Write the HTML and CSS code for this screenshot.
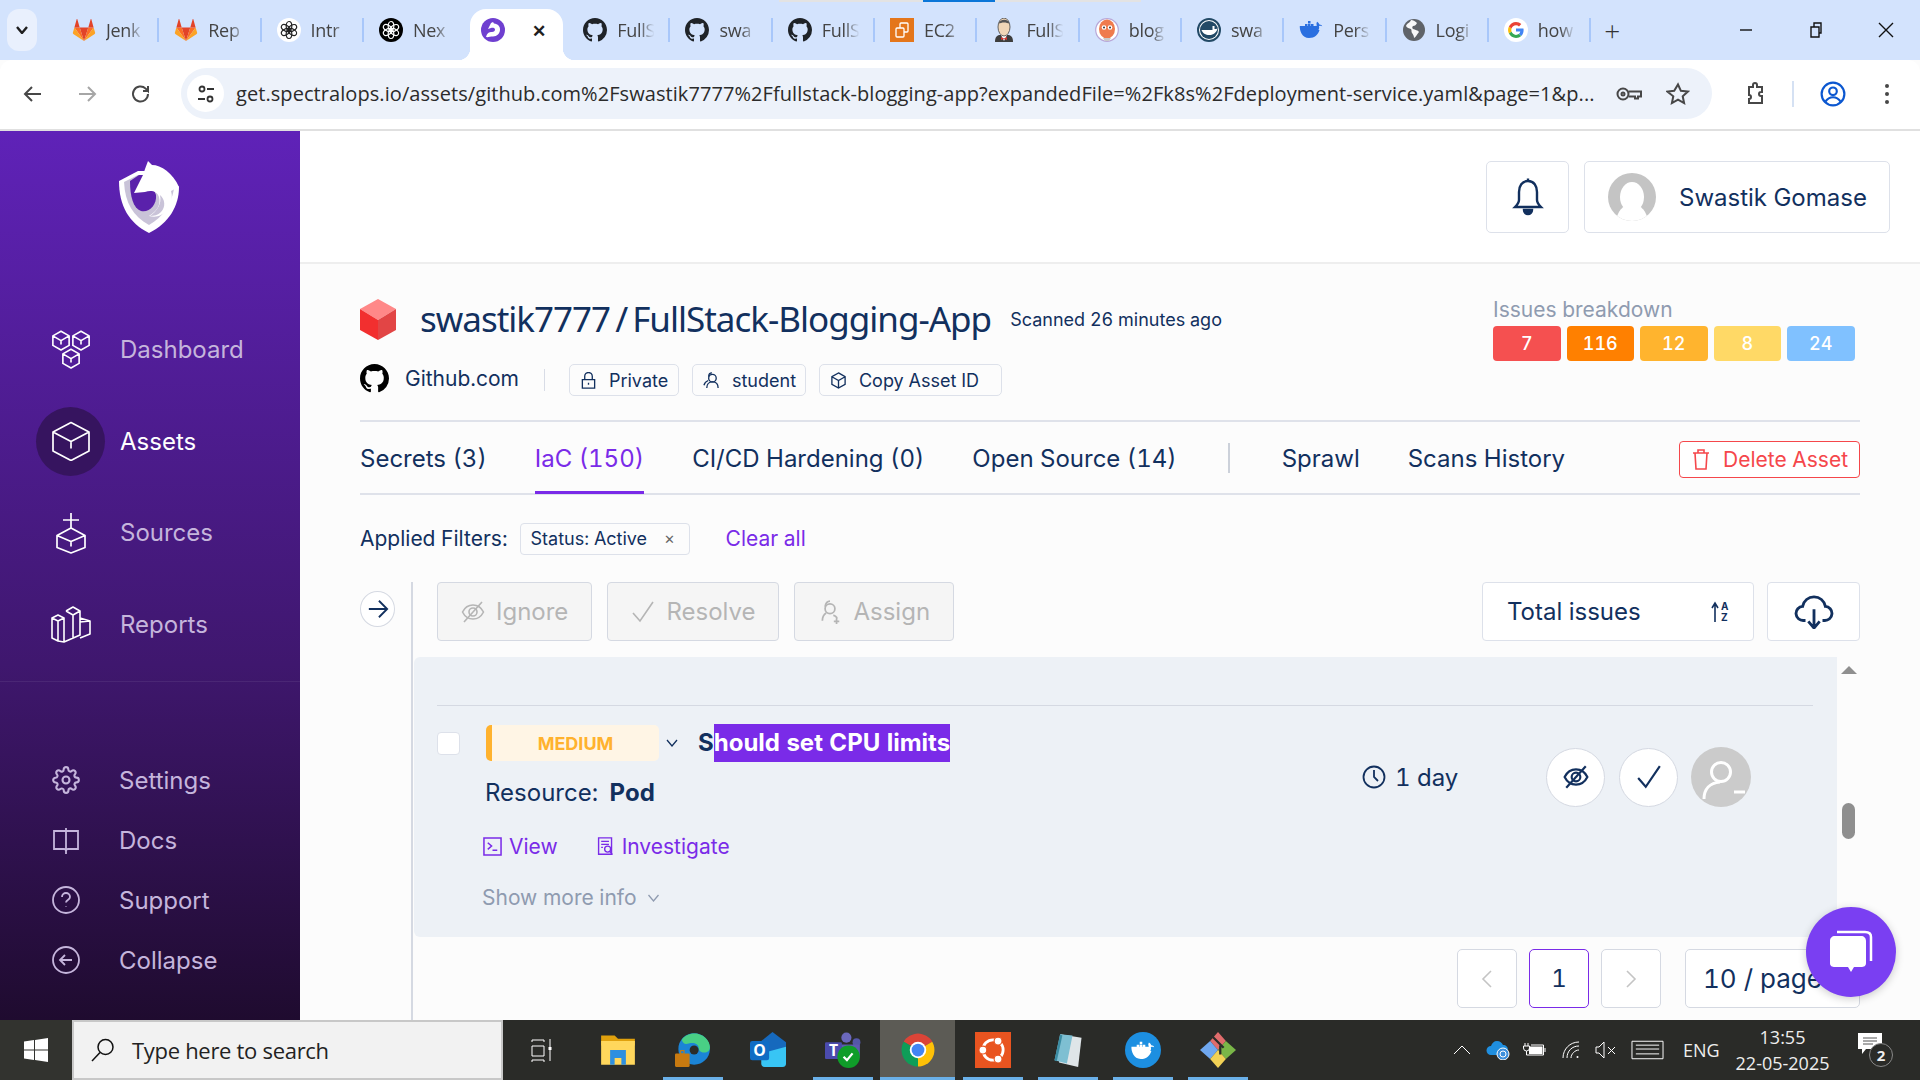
FILE: index.html
```html
<!DOCTYPE html>
<html lang="en">
<head>
    <meta charset="UTF-8">
    <meta name="viewport" content="width=device-width, initial-scale=1.0">
    <title>Assets - Spectral</title>
    <link rel="stylesheet" href="styles.css">
</head>
<body>
    <svg class="sprite" xmlns="http://www.w3.org/2000/svg">
        <defs>
            <symbol id="i-gitlab" viewBox="0 0 24 24">
                <path fill="#e24329" d="M12 23 16.3 9.5H7.7z"/>
                <path fill="#fc6d26" d="M12 23 7.7 9.5H2.4zM12 23l4.3-13.5h5.3z"/>
                <path fill="#fca326" d="M2.4 9.5.9 14.6c-.2.5 0 1 .4 1.3L12 23zM21.6 9.5l1.5 5.1c.2.5 0 1-.4 1.3L12 23z"/>
                <path fill="#e24329" d="M2.4 9.5h5.3L5.4 1.4c-.1-.4-.7-.4-.8 0zM21.6 9.5h-5.3l2.3-8.1c.1-.4.7-.4.8 0z"/>
            </symbol>
            <g id="knot" fill="none" stroke-width="1.2">
                <ellipse cx="12" cy="8" rx="2.8" ry="4.5"/>
                <ellipse cx="12" cy="16" rx="2.8" ry="4.5"/>
                <ellipse cx="12" cy="8" rx="2.8" ry="4.5" transform="rotate(60 12 12)"/>
                <ellipse cx="12" cy="16" rx="2.8" ry="4.5" transform="rotate(60 12 12)"/>
                <ellipse cx="12" cy="8" rx="2.8" ry="4.5" transform="rotate(120 12 12)"/>
                <ellipse cx="12" cy="16" rx="2.8" ry="4.5" transform="rotate(120 12 12)"/>
            </g>
            <symbol id="i-gpt-white" viewBox="0 0 24 24">
                <circle cx="12" cy="12" r="12" fill="#fff"/>
                <use href="#knot" stroke="#222"/>
            </symbol>
            <symbol id="i-gpt-black" viewBox="0 0 24 24">
                <circle cx="12" cy="12" r="12" fill="#000"/>
                <use href="#knot" stroke="#fff"/>
            </symbol>
            <symbol id="i-spectral" viewBox="0 0 24 24">
                <circle cx="12" cy="12" r="12" fill="#6f3fd0"/>
                <path fill="#fff" d="M5 19c1-4 3-5 6-5 2 0 3-1 3-2.5 0-1.500-2-2-4-1.500L7 11l3-6 2-1 1 1.500c4 .5 6 3 6 6 0 4-3 7-7 7-3 0-5 1-7 .5z"/>
            </symbol>
            <symbol id="i-github" viewBox="0 0 16 16">
                <path d="M8 0C3.58 0 0 3.58 0 8c0 3.54 2.29 6.53 5.47 7.59.4.07.55-.17.55-.38 0-.19-.01-.82-.01-1.49-2.01.37-2.53-.49-2.69-.94-.09-.23-.48-.94-.82-1.13-.28-.15-.68-.52-.01-.53.63-.01 1.08.58 1.23.82.72 1.21 1.87.87 2.33.66.07-.52.28-.87.51-1.07-1.78-.2-3.64-.89-3.64-3.95 0-.87.31-1.59.82-2.15-.08-.2-.36-1.02.08-2.12 0 0 .67-.21 2.2.82.64-.18 1.32-.27 2-.27.68 0 1.36.09 2 .27 1.53-1.04 2.2-.82 2.2-.82.44 1.1.16 1.92.08 2.12.51.56.82 1.27.82 2.15 0 3.07-1.87 3.75-3.65 3.95.29.25.54.73.54 1.48 0 1.07-.01 1.93-.01 2.2 0 .21.15.46.55.38A8.013 8.013 0 0016 8c0-4.42-3.58-8-8-8z"/>
            </symbol>
            <symbol id="i-ec2" viewBox="0 0 24 24">
                <rect width="24" height="24" fill="#e4761b"/>
                <g fill="none" stroke="#fff" stroke-width="1.3">
                    <rect x="10" y="5" width="8" height="9" rx="1"/>
                    <rect x="6" y="10" width="8" height="9" rx="1" fill="#e4761b"/>
                </g>
            </symbol>
            <symbol id="i-jenkins" viewBox="0 0 24 24">
                <path fill="#3d3d3d" d="M3 24c0-5 2-7 5-7h8c3 0 5 2 5 7z"/>
                <path fill="#fff" d="M9 17h6l-3 6z"/>
                <path fill="#d33833" d="M9 19l3 1.5 3-1.500v3l-3-1-3 1z"/>
                <ellipse cx="12" cy="9" rx="6" ry="9" fill="#f0d6b7" stroke="#444" stroke-width=".8"/>
                <path fill="#555" d="M6.5 6c1-5 10-6 11 0-3-2-8-2-11 0z"/>
            </symbol>
            <symbol id="i-argo" viewBox="0 0 24 24">
                <circle cx="12" cy="12" r="11.3" fill="#fff" stroke="#b9a8d8" stroke-width="1.2"/>
                <ellipse cx="12" cy="11" rx="8" ry="9.5" fill="#ef7b4d"/>
                <circle cx="9" cy="9.5" r="2.3" fill="#fff"/>
                <circle cx="15" cy="9.5" r="2.3" fill="#fff"/>
                <circle cx="9" cy="9.5" r="1" fill="#333"/>
                <circle cx="15" cy="9.5" r="1" fill="#333"/>
                <path fill="#c9c9c9" d="M8 20l2 3h4l2-3z"/>
            </symbol>
            <symbol id="i-dockerhub" viewBox="0 0 24 24">
                <circle cx="12" cy="12" r="11" fill="#fff" stroke="#234a66" stroke-width="2"/>
                <circle cx="12" cy="12" r="9" fill="#234a66"/>
                <path fill="#fff" d="M4.5 12h11V8h2v3c1 0 2 0 3-.5-1 4-4 6.500-8 6.500-4 0-7-2-8-5z"/>
            </symbol>
            <g id="whale">
                <path d="M.8 12h18.600c.9-1.100 1-2.600.5-3.700 1.100-.7 2.200-.5 3.300 0-.4-1.300-1.600-2-2.900-1.900-.4-1.300-1.300-2.100-2.200-2.600-.8 1.200-.9 2.700 0 3.800-.6.4-1.300.4-2 .4H.8C.5 12.500 3 20 10 20c6 0 9-3.500 10.500-8z"/>
                <path d="M3 9h2.500v2.500H3zM6 9h2.500v2.500H6zM9 9h2.500v2.500H9zM12 9h2.500v2.500H12zM6 6h2.500v2.500H6zM9 6h2.500v2.500H9zM12 6h2.500v2.500H12zM9 3h2.500v2.500H9z"/>
            </g>
            <symbol id="i-docker" viewBox="0 0 24 24">
                <use href="#whale" fill="#2a6fe0"/>
            </symbol>
            <symbol id="i-globe" viewBox="0 0 24 24">
                <circle cx="12" cy="12" r="11" fill="#5f6368"/>
                <path fill="#fff" d="M9 2c-1 3-4 3-5 6 1 2 3 2 5 3 1 1 0 3 1 4s2 3 2 5c2-1 3-4 5-6-1-2-4-2-6-3-1-1-1-2 0-3 2 0 3-1 4-3-2-2-4-3-6-3z" opacity=".95"/>
            </symbol>
            <symbol id="i-google" viewBox="0 0 24 24">
                <circle cx="12" cy="12" r="12" fill="#fff"/>
                <path fill="#4285f4" d="M19.6 12.200c0-.6 0-1.100-.2-1.600H12v3h4.300c-.2 1-.8 1.900-1.600 2.500l2.500 2c1.500-1.400 2.400-3.400 2.400-5.900z"/>
                <path fill="#34a853" d="M12 20c2.200 0 4-.7 5.200-1.900l-2.500-2c-.7.5-1.600.8-2.700.8-2.100 0-3.900-1.400-4.500-3.300l-2.600 2C6.200 18.200 8.900 20 12 20z"/>
                <path fill="#fbbc05" d="M7.500 13.600c-.3-1-.3-2.100 0-3.100l-2.600-2c-1.100 2.200-1.100 4.900 0 7.100z"/>
                <path fill="#ea4335" d="M12 7.200c1.200 0 2.200.4 3 1.200l2.300-2.300C15.900 4.800 14.100 4 12 4 8.900 4 6.200 5.800 4.900 8.500l2.600 2c.6-1.900 2.400-3.300 4.500-3.300z"/>
            </symbol>
            <g id="cube-small" fill="none" stroke-width="1.3" stroke-linejoin="round">
                <path d="M8 1l6.500 3.700v7.600L8 16l-6.500-3.700V4.700zM1.500 4.700 8 8.500l6.500-3.800M8 8.500V11.500"/>
            </g>
            <symbol id="i-dashboard" viewBox="0 0 40 40">
                <g stroke="#fff">
                    <use href="#cube-small" transform="scale(1.25)"/>
                    <use href="#cube-small" transform="translate(20 0) scale(1.25)"/>
                    <use href="#cube-small" transform="translate(10 18) scale(1.25)"/>
                </g>
            </symbol>
            <symbol id="i-cube" viewBox="0 0 40 40">
                <path fill="none" stroke="#fff" stroke-width="1.7" stroke-linejoin="round" d="M20 1.500 38 11v19l-18 9.500L2 30V11zM2 11l18 9.500L38 11M20 20.500v7"/>
            </symbol>
            <symbol id="i-sources" viewBox="0 0 32 42">
                <path fill="none" stroke="#fff" stroke-width="1.7" stroke-linejoin="round" d="M16 16 30 23.500v12L16 41 2 35.500v-12zM2 23.500l14 6 14-6M16 29.500v5M16 1v16M8 8h16"/>
            </symbol>
            <symbol id="i-reports" viewBox="0 0 40 40">
                <path fill="none" stroke="#fff" stroke-width="1.6" stroke-linejoin="round" d="M1 14l6-3 6 3v24l-6-1-6-3zM1 14l6 3 6-3M7 17v20M15 7l7-4 7 4v24l-16 7M15 7l7 4 7-4M22 11v23M29 14l10 3v13l-10 4M29 18l10-1"/>
            </symbol>
            <symbol id="i-gear" viewBox="0 0 24 24">
                <circle cx="12" cy="12" r="3"/>
                <path d="M19.4 15a1.65 1.65 0 0 0 .33 1.82l.06.06a2 2 0 0 1 0 2.83 2 2 0 0 1-2.83 0l-.06-.06a1.65 1.65 0 0 0-1.82-.33 1.65 1.65 0 0 0-1 1.51V21a2 2 0 0 1-2 2 2 2 0 0 1-2-2v-.09A1.65 1.65 0 0 0 9 19.4a1.65 1.65 0 0 0-1.82.33l-.06.06a2 2 0 0 1-2.83 0 2 2 0 0 1 0-2.83l.06-.06a1.65 1.65 0 0 0 .33-1.82 1.65 1.65 0 0 0-1.51-1H3a2 2 0 0 1-2-2 2 2 0 0 1 2-2h.09A1.65 1.65 0 0 0 4.6 9a1.65 1.65 0 0 0-.33-1.82l-.06-.06a2 2 0 0 1 0-2.83 2 2 0 0 1 2.83 0l.06.06a1.65 1.65 0 0 0 1.82.33H9a1.65 1.65 0 0 0 1-1.51V3a2 2 0 0 1 2-2 2 2 0 0 1 2 2v.09a1.65 1.65 0 0 0 1 1.51 1.65 1.65 0 0 0 1.82-.33l.06-.06a2 2 0 0 1 2.83 0 2 2 0 0 1 0 2.83l-.06.06a1.65 1.65 0 0 0-.33 1.82V9a1.65 1.65 0 0 0 1.51 1H21a2 2 0 0 1 2 2 2 2 0 0 1-2 2h-.09a1.65 1.65 0 0 0-1.51 1z"/>
            </symbol>
            <symbol id="i-book" viewBox="0 0 28 28">
                <path d="M14 5H2v18h10c1 0 2 .5 2 2 0-1.500 1-2 2-2h10V5zM14 2v26"/>
            </symbol>
            <symbol id="i-help" viewBox="0 0 28 28">
                <circle cx="14" cy="14" r="13"/>
                <path d="M10 11a4 4 0 0 1 8 0c0 3-4 3-4 5.500M14 20.500v.5"/>
            </symbol>
            <symbol id="i-collapse" viewBox="0 0 28 28">
                <circle cx="14" cy="14" r="13"/>
                <path d="M20 14H8M13 9l-5 5 5 5"/>
            </symbol>
            <symbol id="i-bell" viewBox="0 0 32 40">
                <path d="M16 4c-6 0-9 5-9 11v8c0 3-2 5-4 7h26c-2-2-4-4-4-7v-8c0-6-3-11-9-11zM16 1.500V4"/>
                <path fill="currentColor" d="M12 33h8a4 4 0 0 1-8 0z"/>
            </symbol>
            <symbol id="i-lock" viewBox="0 0 16 18">
                <path d="M1.500 8h13v9h-13zM4 8V4.500a4 4 0 0 1 8 0V8M8 11.500v2"/>
            </symbol>
            <symbol id="i-user" viewBox="0 0 18 18">
                <circle cx="10" cy="6.500" r="4"/>
                <path d="M4 17c0-4 2-6.500 6-6.500s6 2 6 6.500M6 5C6 2.500 7 1 9.500 1M5.500 9C3 10 1.500 12 1 14"/>
            </symbol>
            <symbol id="i-user-add" viewBox="0 0 20 22">
                <circle cx="10" cy="8" r="4.500"/>
                <path d="M3 19c0-4 2-6 3.500-7M5.500 6C6 3 8 1 10 1M13 14c1 0 3 1 3.500 3M16 17v5M13.500 19.500h5"/>
            </symbol>
            <symbol id="i-box" viewBox="0 0 18 18">
                <path d="M9 1l7 4v8l-7 4-7-4V5zM2 5l7 4 7-4M9 9v8"/>
            </symbol>
            <symbol id="i-trash" viewBox="0 0 18 22">
                <path d="M3 5h12l-1 16H4zM1 5h16M6 5V2h6v3"/>
            </symbol>
            <symbol id="i-eye-off" viewBox="0 0 24 24">
                <path d="M1.500 12C4 7 8 5 12 5s8 2 10.500 7c-2.500 5-6.500 7-10.500 7S4 17 1.500 12z"/>
                <circle cx="12" cy="12" r="4"/>
                <path d="M21 2 3 22"/>
            </symbol>
            <symbol id="i-check" viewBox="0 0 24 24">
                <path d="M2 13l7 8L22 2"/>
            </symbol>
            <symbol id="i-chevron" viewBox="0 0 12 8">
                <path d="M1 1l5 6 5-6"/>
            </symbol>
            <symbol id="i-star" viewBox="0 0 24 24">
                <path d="M12 2.500l2.900 6.300 6.900.8-5.100 4.700 1.400 6.800-6.100-3.400-6.100 3.400 1.400-6.800L1.300 9.600l6.900-.8z"/>
            </symbol>
        </defs>
    </svg>

    <div class="load-bar"><span class="load-grey"></span><span class="load-blue"></span><span class="load-grey wide"></span></div>

    <div class="tabstrip">
        <button class="tab-menu"><svg class="ico-chev"><use href="#i-chevron"/></svg></button>
        <div class="tab"><svg class="fav"><use href="#i-gitlab"/></svg><span class="tab-title">Jenk</span></div>
        <div class="tab"><svg class="fav"><use href="#i-gitlab"/></svg><span class="tab-title">Rep</span></div>
        <div class="tab"><svg class="fav"><use href="#i-gpt-white"/></svg><span class="tab-title">Intr</span></div>
        <div class="tab no-line"><svg class="fav"><use href="#i-gpt-black"/></svg><span class="tab-title">Nex</span></div>
        <div class="tab active"><svg class="fav"><use href="#i-spectral"/></svg><span class="tab-close">✕</span></div>
        <div class="tab"><svg class="fav gh"><use href="#i-github"/></svg><span class="tab-title">FullS</span></div>
        <div class="tab"><svg class="fav gh"><use href="#i-github"/></svg><span class="tab-title">swa</span></div>
        <div class="tab"><svg class="fav gh"><use href="#i-github"/></svg><span class="tab-title">FullS</span></div>
        <div class="tab"><svg class="fav"><use href="#i-ec2"/></svg><span class="tab-title">EC2</span></div>
        <div class="tab"><svg class="fav"><use href="#i-jenkins"/></svg><span class="tab-title">FullS</span></div>
        <div class="tab"><svg class="fav"><use href="#i-argo"/></svg><span class="tab-title">blog</span></div>
        <div class="tab"><svg class="fav"><use href="#i-dockerhub"/></svg><span class="tab-title">swa</span></div>
        <div class="tab"><svg class="fav"><use href="#i-docker"/></svg><span class="tab-title">Pers</span></div>
        <div class="tab"><svg class="fav"><use href="#i-globe"/></svg><span class="tab-title">Logi</span></div>
        <div class="tab"><svg class="fav"><use href="#i-google"/></svg><span class="tab-title">how</span></div>
        <div class="tab-new">+</div>
        <div class="win-controls">
            <svg class="win-ico" viewBox="0 0 16 16"><path d="M2 8h12"/></svg>
            <svg class="win-ico" viewBox="0 0 16 16"><path d="M3 5h8v10H3zM6 5V1h7v10h-2"/></svg>
            <svg class="win-ico" viewBox="0 0 16 16"><path d="M1 1l14 14M15 1 1 15"/></svg>
        </div>
    </div>

    <div class="toolbar">
        <div class="nav-btns">
            <svg class="tool-ico" viewBox="0 0 24 24"><path d="M20 12H5M11 5l-7 7 7 7"/></svg>
            <svg class="tool-ico off" viewBox="0 0 24 24"><path d="M4 12h15M13 5l7 7-7 7"/></svg>
            <svg class="tool-ico" viewBox="0 0 24 24"><path d="M19 12a7.500 7.500 0 1 1-2.300-5.400L19 9V4M19 9h-5"/></svg>
        </div>
        <div class="omnibox">
            <span class="site-info"><svg class="tune" viewBox="0 0 20 20"><circle cx="6" cy="5" r="2.500"/><path d="M11 5h7M2 15h7"/><circle cx="14" cy="15" r="2.500"/></svg></span>
            <span class="url">get.spectralops.io/assets/github.com%2Fswastik7777%2Ffullstack-blogging-app?expandedFile=%2Fk8s%2Fdeployment-service.yaml&amp;page=1&amp;p...</span>
            <svg class="tool-ico key" viewBox="0 0 28 24"><circle cx="8" cy="12" r="5.500"/><circle cx="8" cy="12" r="1.500"/><path d="M13.500 9.500H26v5h-3v2h-3v-2h-6.500"/></svg>
            <svg class="tool-ico star"><use href="#i-star"/></svg>
        </div>
        <div class="tool-right">
            <svg class="tool-ico" viewBox="0 0 24 24"><path d="M6 5h4V3a2 2 0 0 1 4 0v2h5v5h-1a2 2 0 0 0 0 4h1v7H6v-4a2 2 0 0 0 0-4z"/></svg>
            <span class="tool-sep"></span>
            <svg class="tool-ico profile" viewBox="0 0 24 24"><circle cx="12" cy="12" r="10.500"/><circle cx="12" cy="9.500" r="3.500"/><path d="M5 19c2-3 4-4 7-4s5 1 7 4"/></svg>
            <span class="dots"><i></i><i></i><i></i></span>
        </div>
    </div>

    <div class="app">
        <aside class="sidebar">
            <div class="logo">
                <svg class="logo-mark" viewBox="0 0 60 72">
                    <path fill="#fff" d="M0 20 19 10 45 10 60 26C60 45 50 62 30 72 10 62 0 45 0 20z"/>
                    <path fill="#c9c3d8" d="M5 21 19 14 45 16 55 28C52 44 44 56 30 64 14 55 6 42 5 21z"/>
                    <path fill="#5a21ab" d="M11 20 20 14 29 14 37 34C38 44 30 52 22 50 14 47 11 35 11 20z"/>
                    <path fill="#fff" d="M29 0 33 4C42 4 54 12 60 26L52 30C55 40 50 50 42 54 38 56 34 56 30 55 38 50 42 44 40 36 38 30 32 29 26 31L15 32 24 14 26 8z"/>
                    <path fill="#c9c3d8" d="M41 34C46 38 47 46 42 51 39 54 35 55 31 55 38 50 43 43 41 34z"/>
                </svg>
            </div>
            <nav class="nav-main">
                <a class="nav-item"><span class="nav-icon"><svg class="ico-40"><use href="#i-dashboard"/></svg></span>Dashboard</a>
                <a class="nav-item current"><span class="nav-icon"><svg class="ico-40"><use href="#i-cube"/></svg></span>Assets</a>
                <a class="nav-item"><span class="nav-icon"><svg class="ico-src"><use href="#i-sources"/></svg></span>Sources</a>
                <a class="nav-item"><span class="nav-icon"><svg class="ico-40"><use href="#i-reports"/></svg></span>Reports</a>
            </nav>
            <nav class="nav-sub">
                <a class="sub-item"><svg class="ico-28"><use href="#i-gear"/></svg>Settings</a>
                <a class="sub-item"><svg class="ico-28"><use href="#i-book"/></svg>Docs</a>
                <a class="sub-item"><svg class="ico-28"><use href="#i-help"/></svg>Support</a>
                <a class="sub-item"><svg class="ico-28"><use href="#i-collapse"/></svg>Collapse</a>
            </nav>
        </aside>

        <main class="main">
            <header class="topbar">
                <button class="top-box bell"><svg class="ico-bell"><use href="#i-bell"/></svg></button>
                <div class="top-box user">
                    <span class="avatar"><span class="avatar-head"></span></span>
                    Swastik Gomase
                </div>
            </header>

            <section class="content">
                <div class="asset-head">
                    <div class="asset-info">
                        <div class="title-row">
                            <svg class="red-cube" viewBox="0 0 36 41">
                                <path fill="#f88" d="M18 0 36 10 18 21 0 10z"/>
                                <path fill="#f22f2f" d="M0 10 18 21v20L0 31z"/>
                                <path fill="#e24545" d="M36 10 18 21v20l18-10z"/>
                            </svg>
                            <h1 class="asset-name">swastik7777<span class="slash">/</span>FullStack-Blogging-App</h1>
                            <span class="scanned">Scanned 26 minutes ago</span>
                        </div>
                        <div class="meta-row">
                            <svg class="gh-mark"><use href="#i-github"/></svg>
                            <span class="source-name">Github.com</span>
                            <span class="meta-sep"></span>
                            <span class="pill private"><svg class="ico-pill"><use href="#i-lock"/></svg>Private</span>
                            <span class="pill student"><svg class="ico-pill"><use href="#i-user"/></svg>student</span>
                            <span class="pill copy"><svg class="ico-pill"><use href="#i-box"/></svg>Copy Asset ID</span>
                        </div>
                    </div>
                    <div class="issues">
                        <div class="issues-label">Issues breakdown</div>
                        <div class="issue-counts">
                            <span class="count critical">7</span>
                            <span class="count high">116</span>
                            <span class="count medium">12</span>
                            <span class="count low">8</span>
                            <span class="count info">24</span>
                        </div>
                    </div>
                </div>

                <div class="tabs">
                    <a class="page-tab">Secrets (3)</a>
                    <a class="page-tab selected">IaC (150)</a>
                    <a class="page-tab">CI/CD Hardening (0)</a>
                    <a class="page-tab">Open Source (14)</a>
                    <span class="tabs-sep"></span>
                    <a class="page-tab">Sprawl</a>
                    <a class="page-tab">Scans History</a>
                    <button class="delete-btn"><svg class="ico-trash"><use href="#i-trash"/></svg>Delete Asset</button>
                </div>

                <div class="filters">
                    <span>Applied Filters:</span>
                    <span class="chip">Status: Active<span class="chip-x">✕</span></span>
                    <a class="clear-all">Clear all</a>
                </div>

                <div class="workspace">
                    <div class="rail">
                        <button class="rail-btn"><svg class="ico-arrow" viewBox="0 0 24 24"><path d="M2 12h19M13 3l9 9-9 9"/></svg></button>
                    </div>
                    <div class="results">
                        <div class="actions">
                            <button class="action-btn"><svg class="ico-act"><use href="#i-eye-off"/></svg>Ignore</button>
                            <button class="action-btn"><svg class="ico-act"><use href="#i-check"/></svg>Resolve</button>
                            <button class="action-btn"><svg class="ico-act"><use href="#i-user-add"/></svg>Assign</button>
                            <button class="sort-box">Total issues
                                <svg class="ico-sort" viewBox="0 0 18 22"><path d="M4 21V3M1 7l3-5 3 5"/><text x="10" y="9" class="sort-a">A</text><text x="10" y="20" class="sort-a">Z</text></svg>
                            </button>
                            <button class="download-box"><svg class="ico-cloud" viewBox="0 0 40 36"><path d="M11 27H9a7.500 7.500 0 0 1-1-15C9 6 14 2 20 2s11 4 12 10a7.500 7.500 0 0 1-1 15h-2M20 15v19M14 28l6 7 6-7"/></svg></button>
                        </div>
                        <div class="results-body">
                            <div class="panel">
                                <div class="issue">
                                    <div class="issue-main">
                                        <div class="issue-title-row">
                                            <span class="checkbox"></span>
                                            <span class="severity">MEDIUM</span>
                                            <svg class="ico-sev"><use href="#i-chevron"/></svg>
                                            <span class="issue-title">S<mark class="selected-text">hould set CPU limits</mark></span>
                                        </div>
                                        <div class="resource">Resource: <b>Pod</b></div>
                                        <div class="issue-links">
                                            <a class="link"><svg class="ico-link" viewBox="0 0 20 20"><path d="M1 1h18v18H1zM5 6l4 3.500L5 13M10 14h5"/></svg>View</a>
                                            <a class="link"><svg class="ico-link" viewBox="0 0 18 22"><path d="M1 1h15v19H1zM4 5h9M4 8.500h9M4 12h2"/><circle cx="11.500" cy="14" r="3.500" fill="#edf1f6"/><path d="M14 16.500l3 4"/></svg>Investigate</a>
                                        </div>
                                        <a class="more-info">Show more info<svg class="ico-more"><use href="#i-chevron"/></svg></a>
                                    </div>
                                    <div class="issue-side">
                                        <span class="age"><svg class="ico-clock" viewBox="0 0 24 24"><circle cx="12" cy="12" r="10.500"/><path d="M12 5v7l4 4"/></svg>1 day</span>
                                        <button class="round-btn"><svg class="ico-round"><use href="#i-eye-off"/></svg></button>
                                        <button class="round-btn"><svg class="ico-round"><use href="#i-check"/></svg></button>
                                        <span class="assignee"><svg class="ico-assignee" viewBox="0 0 60 60"><circle cx="30" cy="25" r="9.500"/><path d="M13 52c0-10 6-16 16-17M43 45h11"/></svg></span>
                                    </div>
                                </div>
                            </div>
                            <div class="scrollbar">
                                <span class="scroll-up"></span>
                                <span class="scroll-thumb"></span>
                            </div>
                        </div>
                        <div class="pagination">
                            <button class="page-btn"><svg class="ico-page" viewBox="0 0 12 20"><path d="M10 2 2 10l8 8"/></svg></button>
                            <button class="page-btn on">1</button>
                            <button class="page-btn"><svg class="ico-page" viewBox="0 0 12 20"><path d="M2 2l8 8-8 8"/></svg></button>
                            <button class="page-size">10 / page</button>
                        </div>
                    </div>
                </div>
            </section>
        </main>
    </div>

    <div class="chat">
        <svg class="chat-ico" viewBox="0 0 48 48">
            <path fill="none" stroke="#fff" stroke-width="2.500" d="M10 4h28c4 0 6 2 6 5v24"/>
            <path fill="#fff" d="M8 8h26c3 0 5 2 5 5v22c0 3-2 4-5 4h-7l-3 5-3-5H8c-3 0-5-1-5-4V13c0-3 2-5 5-5z"/>
        </svg>
    </div>

    <footer class="taskbar">
        <div class="tb-start">
            <svg class="win-logo" viewBox="0 0 24 24"><path fill="#fff" d="M0 3.500 10 2v9.500H0zM11 1.900 24 0v11.500H11zM0 12.500h10V22L0 20.500zM11 12.500h13V24l-13-1.900z"/></svg>
        </div>
        <div class="tb-search">
            <svg class="tb-glass" viewBox="0 0 24 24"><circle cx="14.500" cy="9" r="7.500"/><path d="M9 14.500 1 23"/></svg>
            Type here to search
        </div>
        <div class="tb-apps">
            <span class="tb-app first"><svg class="tb-ico" viewBox="0 0 24 24" fill="none" stroke="#fff" stroke-width="1"><path d="M2 4v-2h12v2M2 8h12v10H2zM2 24v-2h12v2M20 1v22"/><rect x="18.500" y="9" width="3" height="3" fill="#fff" stroke="none"/></svg></span>
            <span class="tb-app"><svg class="tb-ico" viewBox="0 0 32 32"><path fill="#e0a10d" d="M1 3h12l3 3h15v6H1z"/><path fill="#ffd75c" d="M1 8h30v21H1z"/><path fill="#2d8fe0" d="M9 16h14v13h-4v-6h-6v6H9z"/></svg></span>
            <span class="tb-app run"><svg class="tb-ico" viewBox="0 0 32 32"><circle cx="17" cy="15" r="14" fill="#1b84d6"/><path fill="#49cf85" d="M6 7c4-7 18-9 24 2 2 5 1 8-2 9-4 1-7-1-7-4s-4-5-8-4-5 1-7-3z"/><circle cx="17" cy="16" r="4" fill="#2b2c29"/><rect x="0" y="19" width="13" height="12" rx="1" fill="#c87a10"/><rect x="5" y="16.500" width="3" height="3" fill="none" stroke="#c87a10"/></svg></span>
            <span class="tb-app"><svg class="tb-ico" viewBox="0 0 32 32"><path fill="#1669bd" d="M10 8 20 0l12 9v10H10z"/><path fill="#38c5f4" d="M10 19l22-6v15c0 2-1 3-3 3H13c-2 0-3-1-3-3z"/><rect y="8" width="17" height="17" rx="2" fill="#0f6cc4"/><text x="8.500" y="21" class="tb-letter">O</text></svg></span>
            <span class="tb-app run"><svg class="tb-ico" viewBox="0 0 32 32"><circle cx="19" cy="5" r="4.500" fill="#6b68bd"/><circle cx="28" cy="9" r="3.500" fill="#5557a8"/><path fill="#5d5bb0" d="M12 11h19v9c0 6-5 9-10 9s-9-4-9-9z"/><rect y="9" width="15" height="15" rx="1" fill="#4b4bad"/><text x="7.500" y="21" class="tb-letter">T</text><circle cx="21" cy="22" r="10" fill="#0f9d29"/><path fill="none" stroke="#fff" stroke-width="2" d="M16.500 22l3 3 5-6"/></svg></span>
            <span class="tb-app active"><svg class="tb-ico" viewBox="0 0 48 48"><path fill="#db4437" d="M24 24 43 13A22 22 0 0 0 5 13z"/><path fill="#ffc107" d="M24 24 43 13A22 22 0 0 1 24 46z"/><path fill="#0f9d58" d="M24 24V46A22 22 0 0 1 5 13z"/><circle cx="24" cy="24" r="11" fill="#fff"/><circle cx="24" cy="24" r="8.500" fill="#4285f4"/></svg></span>
            <span class="tb-app run"><svg class="tb-ico" viewBox="0 0 32 32"><rect width="32" height="32" fill="#e95420"/><circle cx="16" cy="16" r="9" fill="none" stroke="#fff" stroke-width="2.500"/><circle cx="7" cy="16" r="3.500" fill="#fff" stroke="#e95420"/><circle cx="20.500" cy="8" r="3.500" fill="#fff" stroke="#e95420"/><circle cx="20.500" cy="24" r="3.500" fill="#fff" stroke="#e95420"/></svg></span>
            <span class="tb-app run"><svg class="tb-ico" viewBox="0 0 32 32"><path fill="#dfe5e8" d="M9 2l19 3-3 26-17-4z"/><path fill="#7ebfd2" d="M9 2l11 1-5 25-11-3z"/><path fill="#3b8ca3" d="M9 2 4 25l2 1 5-23z"/></svg></span>
            <span class="tb-app run"><svg class="tb-ico" viewBox="0 0 32 32"><circle cx="16" cy="16" r="16" fill="#1d8fe1"/><use href="#whale" fill="#fff" transform="translate(5 6) scale(.9)"/></svg></span>
            <span class="tb-app run"><svg class="tb-ico" viewBox="0 0 32 32"><path fill="#e06c6c" d="M16 0l7 8-7 8-7-8z"/><path fill="#7ab648" d="M23 8l9 8-9 8-7-8z"/><path fill="#6fa8f0" d="M9 8l7 8-7 8-9-8z"/><path fill="#f2d256" d="M16 16l7 8-7 8-7-8z"/><path fill="none" stroke="#2b2c29" stroke-width="2" d="M11 4l10 10M18 12v8"/></svg></span>
        </div>
        <div class="tray">
            <svg class="tray-ico up" viewBox="0 0 18 10"><path d="M1 9l8-8 8 8"/></svg>
            <svg class="tray-ico drive" viewBox="0 0 24 20"><path fill="#1f8fe0" d="M5 15a4.500 4.500 0 0 1 0-9c1-3 3-5 6-5 3 0 5 2 6 4 3 0 5 2 5 5H16c-4 0-5 2-5 5z"/><circle cx="17" cy="14" r="6" fill="#3c8fdc" stroke="#fff" stroke-width="1"/><circle cx="17" cy="14" r="3" fill="none" stroke="#fff"/></svg>
            <svg class="tray-ico batt" viewBox="0 0 24 14"><path d="M3 0v3M6 0v3M1.500 3h6v2a3 3 0 0 1-6 0zM4.500 8v4h17V2H9M23 5v4"/><rect x="7" y="3.500" width="13.500" height="7.500" fill="#fff" stroke="none"/></svg>
            <svg class="tray-ico wifi" viewBox="0 0 18 18"><path d="M1 17C1 8 8 1 17 1M5 17C5 10 10 5 17 5M9 17c0-4 4-8 8-8"/><circle cx="15.500" cy="16" r="1" fill="#fff" stroke="none"/></svg>
            <svg class="tray-ico mute" viewBox="0 0 22 18"><path d="M1 6h3l5-5v16l-5-5H1zM13 6l7 7M20 6l-7 7"/></svg>
            <svg class="tray-ico keys" viewBox="0 0 34 20"><path d="M1 1h32v18H1zM5 5h24M5 9h24M5 14h24" /></svg>
            <span class="lang">ENG</span>
            <div class="clock"><span>13:55</span><span>22-05-2025</span></div>
            <div class="notif">
                <svg class="notif-ico" viewBox="0 0 24 24"><path fill="#fff" d="M0 0h24v16h-16l-4 5v-5H0z"/><path stroke="#555" stroke-width="1" d="M5 5h14M5 8h14M5 11h10"/></svg>
                <span class="notif-count">2</span>
            </div>
        </div>
    </footer>
</body>
</html>
```

FILE: styles.css
```css
* {
    box-sizing: border-box;
}
html, body {
    margin: 0;
    height: 100%;
}
body {
    width: 1920px;
    height: 1080px;
    overflow: hidden;
    display: flex;
    flex-direction: column;
    font-family: Inter, "Noto Sans", sans-serif;
    font-variant-numeric: tabular-nums;
    color: #12305e;
    background: #fcfcfc;
}
button {
    font: inherit;
    color: inherit;
    padding: 0;
}
svg {
    display: block;
    flex-shrink: 0;
}
.sprite {
    position: absolute;
    width: 0;
    height: 0;
}

/* browser tabs */
.load-bar {
    position: absolute;
    top: 0;
    left: 779px;
    display: flex;
    height: 2px;
}
.load-grey {
    width: 144px;
    background: #e3e3e3;
}
.load-grey.wide {
    width: 146px;
}
.load-blue {
    width: 72px;
    background: #0b76d8;
}
.tabstrip {
    height: 60px;
    background: #d3e3fd;
    display: flex;
    align-items: flex-end;
    font-family: "Open Sans", sans-serif;
    color: #444;
}
.tab-menu {
    width: 30px;
    height: 42px;
    margin: 0 20px 9px 7px;
    border: 0;
    border-radius: 12px;
    background: #e9f0fd;
    display: flex;
    align-items: center;
    justify-content: center;
}
.ico-chev {
    width: 12px;
    height: 8px;
    fill: none;
    stroke: #1f1f1f;
    stroke-width: 2.4;
}
.tab {
    width: 102.3px;
    height: 51px;
    padding: 0 0 9px 15px;
    display: flex;
    align-items: center;
    position: relative;
}
.tab::after {
    content: "";
    position: absolute;
    right: 0;
    top: 9px;
    width: 2px;
    height: 24px;
    background: #a8c7fa;
}
.tab.no-line::after,
.tab.active::after {
    display: none;
}
.tab.active {
    width: 93px;
    margin: 0 5px 0 4px;
    padding-left: 11px;
    background: #fff;
    border-radius: 16px 16px 0 0;
}
.tab.active::before {
    content: "";
    position: absolute;
    bottom: 0;
    left: -12px;
    width: calc(100% + 24px);
    height: 12px;
    background:
        radial-gradient(circle at 0 0, #d3e3fd 12px, #fff 12.5px) left bottom / 12px 12px no-repeat,
        radial-gradient(circle at 100% 0, #d3e3fd 12px, #fff 12.5px) right bottom / 12px 12px no-repeat;
}
.fav {
    width: 24px;
    height: 24px;
}
.fav.gh {
    fill: #1f2328;
}
.tab-title {
    width: 44px;
    margin-left: 10px;
    font-size: 18px;
    letter-spacing: -0.3px;
    white-space: nowrap;
    -webkit-mask-image: linear-gradient(90deg, #000 50%, transparent 85%);
    mask-image: linear-gradient(90deg, #000 50%, transparent 85%);
}
.tab-close {
    margin-left: 27px;
    font-size: 17px;
    font-weight: 700;
    color: #1f1f1f;
}
.tab-new {
    width: 38px;
    height: 51px;
    padding: 0 0 9px 13px;
    display: flex;
    align-items: center;
    font-size: 28px;
    font-weight: 300;
    color: #333;
}
.win-controls {
    margin-left: auto;
    height: 60px;
    display: flex;
    align-items: center;
    gap: 54px;
    padding-right: 26px;
}
.win-ico {
    width: 16px;
    height: 16px;
    fill: none;
    stroke: #111;
    stroke-width: 1.4;
}

/* address bar */
.toolbar {
    height: 71px;
    padding-bottom: 10px;
    background: #fff;
    border-bottom: 2px solid #e0e0e0;
    border-radius: 12px 12px 0 0;
    display: flex;
    align-items: flex-end;
}
.nav-btns {
    width: 181px;
    height: 51px;
    padding-left: 21px;
    display: flex;
    align-items: center;
    gap: 30px;
}
.tool-ico {
    width: 24px;
    height: 24px;
    fill: none;
    stroke: #474747;
    stroke-width: 2;
}
.tool-ico.off {
    stroke: #a6a6a6;
}
.omnibox {
    width: 1531px;
    height: 51px;
    border-radius: 26px;
    background: #edf2fa;
    display: flex;
    align-items: center;
    padding-left: 6px;
}
.site-info {
    width: 37px;
    height: 37px;
    border-radius: 50%;
    background: #fff;
    display: flex;
    align-items: center;
    justify-content: center;
}
.tune {
    width: 20px;
    height: 20px;
    fill: none;
    stroke: #333;
    stroke-width: 1.8;
}
.url {
    margin-left: 12px;
    width: 1380px;
    font-family: "Open Sans", sans-serif;
    font-size: 20px;
    letter-spacing: 0.07px;
    white-space: nowrap;
    color: #2b2b2b;
}
.key {
    width: 28px;
    margin-left: -1px;
}
.star {
    margin-left: 23px;
    fill: none;
}
.tool-right {
    height: 51px;
    padding-left: 31px;
    display: flex;
    align-items: center;
}
.tool-sep {
    width: 2px;
    height: 26px;
    margin: 0 26px 0 25px;
    background: #d5e1f3;
}
.profile {
    width: 26px;
    height: 26px;
    stroke: #0b57d0;
}
.dots {
    margin-left: 39px;
    display: flex;
    flex-direction: column;
    gap: 4px;
}
.dots i {
    width: 4px;
    height: 4px;
    border-radius: 50%;
    background: #474747;
}

/* page layout */
.app {
    flex: 1;
    min-height: 0;
    display: flex;
}
.sidebar {
    width: 300px;
    flex-shrink: 0;
    background: linear-gradient(180deg, #5f22b8 0%, #3f176e 60%, #1f0b2f 100%);
    font-size: 24px;
    color: #c5b5dc;
}
.logo {
    height: 173px;
    padding: 30px 0 0 119px;
}
.logo-mark {
    width: 60px;
    height: 72px;
}
.nav-main {
    border-bottom: 1px solid rgba(255, 255, 255, 0.07);
    height: 378px;
}
.nav-item {
    height: 91.5px;
    padding-left: 36px;
    display: flex;
    align-items: center;
    gap: 15px;
}
.nav-icon {
    width: 69px;
    height: 69px;
    border-radius: 50%;
    display: flex;
    align-items: center;
    justify-content: center;
}
.nav-item.current {
    color: #fff;
}
.nav-item.current .nav-icon {
    background: #36145f;
}
.ico-40 {
    width: 40px;
    height: 40px;
}
.ico-src {
    width: 32px;
    height: 42px;
}
.nav-sub {
    padding-top: 68px;
}
.sub-item {
    height: 60px;
    padding-left: 52px;
    display: flex;
    align-items: center;
    gap: 39px;
}
.ico-28 {
    width: 28px;
    height: 28px;
    fill: none;
    stroke: #c5b5dc;
    stroke-width: 1.8;
}
.main {
    flex: 1;
    min-width: 0;
    display: flex;
    flex-direction: column;
}
.topbar {
    height: 133px;
    background: #fff;
    border-bottom: 2px solid #eee;
    padding: 30px 30px 0 0;
    display: flex;
    justify-content: flex-end;
    gap: 15px;
}
.top-box {
    height: 72px;
    background: #fff;
    border: 1.5px solid #dde1ea;
    border-radius: 5px;
}
.bell {
    width: 83px;
    display: flex;
    align-items: center;
    justify-content: center;
}
.ico-bell {
    width: 32px;
    height: 40px;
    fill: none;
    stroke: currentColor;
    stroke-width: 2.4;
}
.user {
    width: 306px;
    padding-left: 23px;
    display: flex;
    align-items: center;
    gap: 23px;
    font-size: 24px;
}
.avatar {
    width: 48px;
    height: 48px;
    border-radius: 50%;
    background: #c4c4c4;
    display: flex;
    justify-content: center;
    overflow: hidden;
}
.avatar-head {
    width: 24px;
    height: 30px;
    margin-top: 9px;
    border-radius: 50%;
    background: #fff;
    box-shadow: 0 26px 0 4px #fff;
}
.content {
    flex: 1;
    min-height: 0;
    padding: 0 60px;
    display: flex;
    flex-direction: column;
}

/* asset header */
.asset-head {
    height: 158px;
    padding-top: 33px;
    border-bottom: 2px solid #dfe2ea;
    display: flex;
    justify-content: space-between;
}
.title-row {
    height: 44px;
    display: flex;
    align-items: center;
}
.red-cube {
    width: 36px;
    height: 41px;
}
.asset-name {
    margin: 0 0 2px 24px;
    font-family: "Noto Sans", sans-serif;
    font-size: 35px;
    font-weight: 400;
    letter-spacing: -1px;
    white-space: nowrap;
}
.slash {
    margin: 0 5px;
}
.scanned {
    margin: 1px 0 0 19px;
    font-size: 18px;
    white-space: nowrap;
}
.meta-row {
    margin-top: 23px;
    height: 32px;
    display: flex;
    align-items: center;
}
.gh-mark {
    width: 29px;
    height: 29px;
    margin-bottom: 3px;
    fill: #000;
}
.source-name {
    margin: 0 25px 4px 16px;
    font-size: 21px;
}
.meta-sep {
    width: 1px;
    height: 22px;
    margin-right: 24px;
    background: #d8dce6;
}
.pill {
    height: 32px;
    margin-right: 13px;
    padding: 0 10px;
    background: #fcfcfc;
    border: 1.5px solid #dde1ea;
    border-radius: 5px;
    display: flex;
    align-items: center;
    gap: 12px;
    font-size: 18px;
}
.private {
    width: 110px;
}
.student {
    width: 114px;
}
.copy {
    width: 183px;
}
.ico-pill {
    width: 17px;
    height: 17px;
    fill: none;
    stroke: currentColor;
    stroke-width: 1.4;
}
.issues {
    width: 367px;
}
.issues-label {
    height: 29px;
    font-size: 21px;
    color: #8f9bb0;
}
.issue-counts {
    display: flex;
    gap: 6px;
}
.count {
    width: 67.5px;
    height: 35px;
    border-radius: 4px;
    display: flex;
    align-items: center;
    justify-content: center;
    color: #fff;
    font-size: 18px;
    font-weight: 500;
}
.critical { background: #f55050; }
.high { background: #ff8000; }
.medium { background: #ffb42e; }
.low { background: #ffd966; }
.info { background: #80c1ff; }

/* page tabs */
.tabs {
    height: 73px;
    border-bottom: 2px solid #dfe2ea;
    display: flex;
    align-items: center;
    font-size: 24px;
}
.page-tab {
    height: 73px;
    margin: 0 48px 0 0;
    padding-top: 23px;
    white-space: nowrap;
}
.page-tab.selected {
    color: #7a2be8;
    border-bottom: 3px solid #7a2be8;
}
.tabs-sep {
    width: 2px;
    height: 30px;
    margin: 0 52px 0 3px;
    background: #ccd1da;
}
.tabs-sep + .page-tab {
    margin-right: 48px;
}
.delete-btn {
    margin: 3px 0 0 auto;
    width: 181px;
    height: 37px;
    background: #fff;
    border: 1.5px solid #f5474b;
    border-radius: 4px;
    color: #f5474b;
    font-size: 21px;
    display: flex;
    align-items: center;
    padding-left: 12px;
    gap: 13px;
    white-space: nowrap;
}
.ico-trash {
    width: 18px;
    height: 22px;
    fill: none;
    stroke: #f5474b;
    stroke-width: 1.6;
}

/* filters */
.filters {
    height: 87px;
    display: flex;
    align-items: center;
    font-size: 21px;
    white-space: nowrap;
}
.chip {
    width: 170px;
    height: 32px;
    margin: 0 36px 0 12px;
    padding-left: 10px;
    background: #fcfcfc;
    border: 1.5px solid #dde1ea;
    border-radius: 4px;
    display: flex;
    align-items: center;
    font-size: 18px;
}
.chip-x {
    margin-left: 17px;
    font-size: 13px;
    color: #666;
}
.clear-all {
    color: #7a2be8;
}

/* issue list */
.workspace {
    flex: 1;
    min-height: 0;
    display: flex;
}
.rail {
    width: 53px;
    border-right: 2px solid #d5d9e2;
}
.rail-btn {
    width: 35px;
    height: 36px;
    margin-top: 9px;
    border: 1.5px solid #d5d9e2;
    border-radius: 50%;
    background: #fff;
    display: flex;
    align-items: center;
    justify-content: center;
}
.ico-arrow {
    width: 22px;
    height: 22px;
    fill: none;
    stroke: #12305e;
    stroke-width: 2;
}
.results {
    flex: 1;
    min-width: 0;
}
.actions {
    height: 59px;
    padding-left: 24px;
    display: flex;
    gap: 15px;
    font-size: 24px;
}
.action-btn {
    height: 59px;
    padding: 0 23px;
    background: #f5f5f5;
    border: 1.5px solid #d5d9e2;
    border-radius: 4px;
    color: #b5b5b5;
    display: flex;
    align-items: center;
    gap: 11px;
    white-space: nowrap;
}
.ico-act {
    width: 24px;
    height: 24px;
    fill: none;
    stroke: #b5b5b5;
    stroke-width: 1.6;
}
.sort-box {
    width: 272px;
    height: 59px;
    margin-left: auto;
    padding: 0 24px;
    background: #fff;
    border: 1.5px solid #dde1ea;
    border-radius: 4px;
    display: flex;
    align-items: center;
    justify-content: space-between;
}
.ico-sort {
    width: 18px;
    height: 22px;
    fill: none;
    stroke: #12305e;
    stroke-width: 1.6;
}
.sort-a {
    font-size: 10px;
    font-weight: 700;
    fill: #12305e;
    stroke: none;
}
.download-box {
    width: 93px;
    height: 59px;
    margin-left: -2px;
    background: #fff;
    border: 1.5px solid #dde1ea;
    border-radius: 4px;
    display: flex;
    align-items: center;
    justify-content: center;
}
.ico-cloud {
    width: 40px;
    height: 34px;
    fill: none;
    stroke: #12305e;
    stroke-width: 3;
}
.results-body {
    margin-top: 16px;
    height: 280px;
    display: flex;
}
.panel {
    width: 1423px;
    margin-left: 1px;
    padding: 48px 24px 0 23px;
    background: #edf1f6;
    border-radius: 6px 0 0 6px;
}
.issue {
    border-top: 1.5px solid #d5d9e2;
    padding: 18px 62px 0 0;
    display: flex;
    justify-content: space-between;
}
.issue-title-row {
    display: flex;
    align-items: center;
}
.checkbox {
    width: 23px;
    height: 23px;
    margin-right: 26px;
    border: 1.5px solid #dde1ea;
    border-radius: 4px;
    background: #fff;
}
.severity {
    width: 173px;
    height: 36px;
    border-left: 6px solid #ffb22e;
    border-radius: 5px;
    background: #fff5e5;
    color: #ffb22e;
    font-size: 18px;
    font-weight: 700;
    display: flex;
    align-items: center;
    justify-content: center;
}
.ico-sev {
    width: 12px;
    height: 8px;
    margin: 0 20px 0 7px;
    fill: none;
    stroke: #12305e;
    stroke-width: 1.3;
}
.issue-title {
    font-size: 24px;
    font-weight: 700;
    white-space: nowrap;
}
.selected-text {
    display: inline-block;
    height: 38px;
    line-height: 38px;
    background: #7a2be8;
    color: #fff;
}
.resource {
    margin: 15px 0 0 48px;
    font-size: 24px;
    line-height: 32px;
}
.resource b {
    margin-left: 5px;
}
.issue-links {
    margin: 25px 0 0 46px;
    display: flex;
    gap: 38px;
    font-size: 21px;
}
.link {
    display: flex;
    align-items: center;
    gap: 7px;
    color: #7a2be8;
}
.ico-link {
    width: 19px;
    height: 19px;
    fill: none;
    stroke: #7a2be8;
    stroke-width: 1.6;
}
.more-info {
    margin: 26px 0 0 45px;
    display: flex;
    align-items: center;
    gap: 10px;
    font-size: 21px;
    color: #8f9bb0;
}
.ico-more {
    width: 13px;
    height: 8px;
    fill: none;
    stroke: #8f9bb0;
    stroke-width: 1.3;
}
.issue-side {
    margin-top: 23px;
    height: 60px;
    display: flex;
    align-items: center;
}
.age {
    width: 184px;
    display: flex;
    align-items: center;
    gap: 9px;
    font-size: 24px;
}
.ico-clock {
    width: 24px;
    height: 24px;
    fill: none;
    stroke: #12305e;
    stroke-width: 1.8;
}
.round-btn {
    width: 59px;
    height: 59px;
    margin-right: 14px;
    background: #fff;
    border: 1.5px solid #d5d9e2;
    border-radius: 50%;
    display: flex;
    align-items: center;
    justify-content: center;
}
.round-btn + .round-btn {
    margin-right: 13px;
}
.ico-round {
    width: 26px;
    height: 26px;
    fill: none;
    stroke: #12305e;
    stroke-width: 2;
}
.assignee {
    width: 60px;
    height: 60px;
    border-radius: 50%;
    background: #cbcbcb;
}
.ico-assignee {
    width: 60px;
    height: 60px;
    fill: none;
    stroke: #fff;
    stroke-width: 3;
}
.scrollbar {
    width: 23px;
    display: flex;
    flex-direction: column;
    align-items: center;
}
.scroll-up {
    margin-top: 9px;
    border-left: 8px solid transparent;
    border-right: 8px solid transparent;
    border-bottom: 8px solid #8f8f8f;
}
.scroll-thumb {
    width: 13px;
    height: 36px;
    margin-top: 129px;
    border-radius: 7px;
    background: #8f8f8f;
}
.pagination {
    margin-top: 12px;
    display: flex;
    justify-content: flex-end;
    gap: 12px;
    font-size: 26px;
}
.page-btn {
    width: 60px;
    height: 59px;
    background: #fff;
    border: 1.5px solid #d5d9e2;
    border-radius: 5px;
    display: flex;
    align-items: center;
    justify-content: center;
}
.page-btn.on {
    border-color: #7a2be8;
    font-size: 24px;
}
.ico-page {
    width: 12px;
    height: 20px;
    fill: none;
    stroke: #c4c4c4;
    stroke-width: 1.6;
}
.page-size {
    width: 175px;
    height: 59px;
    margin-left: 12px;
    padding-left: 17px;
    background: #fff;
    border: 1.5px solid #d5d9e2;
    border-radius: 5px;
    text-align: left;
}
.chat {
    position: absolute;
    left: 1806px;
    top: 907px;
    width: 90px;
    height: 90px;
    border-radius: 50%;
    background: #7a3ff2;
    box-shadow: 0 2px 8px rgba(0, 0, 0, 0.2);
    display: flex;
    align-items: center;
    justify-content: center;
}
.chat-ico {
    width: 48px;
    height: 48px;
}

/* windows taskbar */
.taskbar {
    height: 60px;
    flex-shrink: 0;
    background: #2a2b28;
    display: flex;
    color: #fff;
}
.tb-start {
    width: 72px;
    background: #32332f;
    display: flex;
    align-items: center;
    justify-content: center;
}
.win-logo {
    width: 24px;
    height: 24px;
}
.tb-search {
    width: 431px;
    background: #f2f2f2;
    border: 2px solid #c8c8c8;
    display: flex;
    align-items: center;
    gap: 17px;
    padding-left: 17px;
    font-family: "Open Sans", sans-serif;
    font-size: 22px;
    letter-spacing: -0.3px;
    color: #222;
}
.tb-glass {
    width: 24px;
    height: 24px;
    fill: none;
    stroke: #111;
    stroke-width: 1.5;
}
.tb-apps {
    display: flex;
}
.tb-app {
    width: 75px;
    height: 60px;
    display: flex;
    align-items: center;
    justify-content: center;
}
.tb-app.first {
    width: 77px;
}
.tb-app.run {
    background: linear-gradient(#6ab0e8, #6ab0e8) center bottom / 60px 3px no-repeat;
}
.tb-app.active {
    background: #5c5b55 linear-gradient(#6ab0e8, #6ab0e8) center bottom / 100% 3px no-repeat;
}
.tb-ico {
    width: 36px;
    height: 36px;
}
.tb-app.first .tb-ico {
    width: 24px;
    height: 24px;
}
.tb-letter {
    font-size: 14px;
    font-weight: 700;
    fill: #fff;
    text-anchor: middle;
    font-family: "Open Sans", sans-serif;
}
.tray {
    margin-left: auto;
    padding-right: 27px;
    display: flex;
    align-items: center;
    font-family: "Open Sans", sans-serif;
    font-size: 18px;
    color: #eee;
}
.tray-ico {
    fill: none;
    stroke: #fff;
    stroke-width: 1;
}
.up {
    width: 18px;
    height: 10px;
    margin-right: 15px;
}
.drive {
    width: 24px;
    height: 20px;
    stroke: none;
    margin-right: 12px;
}
.batt {
    width: 24px;
    height: 14px;
    margin-right: 16px;
}
.wifi {
    width: 18px;
    height: 18px;
    margin-right: 15px;
}
.mute {
    width: 22px;
    height: 18px;
    margin-right: 14px;
}
.keys {
    width: 33px;
    height: 20px;
    margin-right: 19px;
}
.lang {
    width: 53px;
}
.clock {
    width: 93px;
    display: flex;
    flex-direction: column;
    align-items: center;
    gap: 2px;
    line-height: 24px;
    white-space: nowrap;
}
.notif {
    margin-left: 29px;
    width: 35px;
    height: 34px;
    position: relative;
}
.notif-ico {
    width: 24px;
    height: 24px;
}
.notif-count {
    position: absolute;
    right: 0;
    bottom: 0;
    width: 24px;
    height: 24px;
    border-radius: 50%;
    background: #2a2b28;
    border: 1px solid #888;
    display: flex;
    align-items: center;
    justify-content: center;
    font-size: 15px;
    font-weight: 700;
}
```
